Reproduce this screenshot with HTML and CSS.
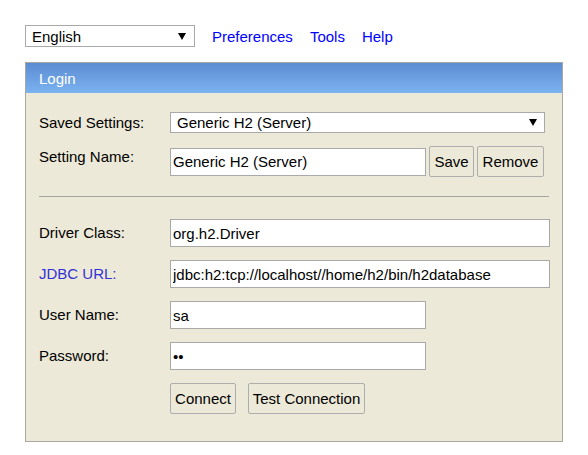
FILE: index.html
```html
<!DOCTYPE html>
<html>
<head>
<meta charset="utf-8">
<title>H2 Console</title>
<link rel="stylesheet" href="styles.css">
</head>
<body>
<div class="page">
  <div class="topbar">
    <div class="select-wrap lang">
      <select class="select"><option>English</option></select>
      <svg class="arrow" width="8" height="7" viewBox="0 0 8 7"><polygon points="0,0 8,0 4,7" fill="#000"/></svg>
    </div>
    <nav class="menu">
      <a href="#">Preferences</a>
      <a href="#">Tools</a>
      <a href="#">Help</a>
    </nav>
  </div>

  <div class="panel">
    <div class="panel-head">Login</div>
    <div class="panel-body">
      <div class="form">
        <div class="lbl">Saved Settings:</div>
        <div class="field">
          <div class="select-wrap saved">
            <select class="select"><option>Generic H2 (Server)</option></select>
            <svg class="arrow" width="8" height="7" viewBox="0 0 8 7"><polygon points="0,0 8,0 4,7" fill="#000"/></svg>
          </div>
        </div>

        <div class="lbl">Setting Name:</div>
        <div class="field">
          <input class="input short" type="text" value="Generic H2 (Server)">
          <button class="btn save">Save</button>
          <button class="btn remove">Remove</button>
        </div>

        <div class="sep"></div>

        <div class="lbl lbl-in">Driver Class:</div>
        <div class="field"><input class="input long" type="text" value="org.h2.Driver"></div>

        <div class="lbl lbl-in"><a class="jdbc" href="#">JDBC URL:</a></div>
        <div class="field"><input class="input long" type="text" value="jdbc:h2:tcp://localhost//home/h2/bin/h2database"></div>

        <div class="lbl lbl-in">User Name:</div>
        <div class="field"><input class="input short" type="text" value="sa"></div>

        <div class="lbl lbl-in">Password:</div>
        <div class="field"><input class="input short" type="password" value="sa"></div>

        <div class="lbl"></div>
        <div class="field actions">
          <button class="btn connect">Connect</button>
          <button class="btn test">Test Connection</button>
        </div>
      </div>
    </div>
  </div>
</div>
</body>
</html>
```

FILE: styles.css
```css
html, body {
  margin: 0;
  padding: 0;
  background: #ffffff;
}
body {
  font-family: "Liberation Sans", Arial, sans-serif;
  font-size: 15px;
  line-height: 17px;
  color: #000;
}
.page {
  padding: 25px 0 0 25px;
}
.topbar {
  display: flex;
  align-items: center;
  height: 22px;
}
.select-wrap {
  position: relative;
  display: flex;
}
.select {
  -webkit-appearance: none;
  appearance: none;
  box-sizing: border-box;
  font-family: inherit;
  font-size: 15px;
  color: #000;
  background: #fff;
  border: 1px solid #a9a9a9;
  border-radius: 0;
  margin: 0;
  outline: none;
}
.lang .select {
  width: 170px;
  height: 22px;
  padding: 0 0 0 6px;
}
.saved .select {
  width: 375px;
  height: 21px;
  padding: 0 0 0 6px;
}
.arrow {
  position: absolute;
  top: 8px;
  pointer-events: none;
}
.lang .arrow { right: 9px; top: 8px; }
.saved .arrow { right: 8px; top: 7px; }

.menu {
  display: flex;
  gap: 17px;
  margin-left: 17px;
  padding-top: 1px;
}
.menu a {
  color: #0000ff;
  text-decoration: none;
}

.panel {
  margin-top: 15px;
  width: 538px;
  box-sizing: border-box;
  border: 1px solid #a8a8a0;
  background: #ece9d8;
}
.panel-head {
  height: 30px;
  box-sizing: border-box;
  padding: 7px 0 0 13px;
  color: #fff;
  background: linear-gradient(#5c8bd2, #7bb3f1);
}
.panel-body {
  padding: 19px 12px 27px 13px;
}
.form {
  display: grid;
  grid-template-columns: 131px 380px;
  row-gap: 13px;
}
.lbl {
  padding-top: 2px;
  white-space: nowrap;
}
.lbl-in {
  padding-top: 5px;
}
.jdbc {
  color: #3232d6;
  text-decoration: none;
}
.field {
  display: flex;
  align-items: center;
  gap: 3px;
}
.sep {
  grid-column: 1 / -1;
  height: 0;
  border-top: 1px solid #a5a5a0;
  margin: 6px 1px 9px 0;
}
.input {
  box-sizing: border-box;
  height: 28px;
  margin: 0;
  padding: 0 2px 0 2px;
  border: 1px solid #a9a9a9;
  background: #fff;
  font-family: inherit;
  font-size: 15px;
  color: #000;
  outline: none;
}
.input.long { width: 380px; }
.input.short { width: 256px; }
.btn {
  box-sizing: border-box;
  height: 31px;
  margin: 0;
  padding: 0;
  border: 1px solid #adadad;
  border-radius: 2px;
  background: #ece9d8;
  font-family: inherit;
  font-size: 15px;
  color: #000;
}
.btn.save { width: 45px; }
.btn.remove { width: 67px; }
.actions { gap: 12px; }
.btn.connect { width: 66px; }
.btn.test { width: 117px; }
```
